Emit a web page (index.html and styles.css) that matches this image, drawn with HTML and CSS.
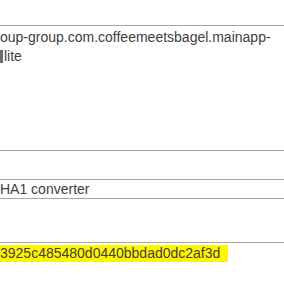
FILE: index.html
```html
<!DOCTYPE html>
<html>
<head>
<meta charset="utf-8">
<link rel="stylesheet" href="styles.css">
</head>
<body>
<div class="page">
  <div class="gap-top"></div>
  <div class="row row-tall">
    <div class="cell">oup-group.com.coffeemeetsbagel.mainapp-<br><span class="sel"></span>lite</div>
  </div>
  <div class="row row-empty"></div>
  <div class="row row-text">
    <div class="cell">HA1 converter</div>
  </div>
  <div class="row row-empty2"></div>
  <div class="row row-hash">
    <div class="cell"><span class="mark">3925c485480d0440bbdad0dc2af3d</span></div>
  </div>
</div>
</body>
</html>
```
FILE: styles.css
```css
html, body {
  margin: 0;
  padding: 0;
  background: #ffffff;
}
.page {
  width: 284px;
  height: 284px;
  overflow: hidden;
  font-family: "Liberation Sans", Arial, sans-serif;
  font-size: 14px;
  color: #404040;
  display: flex;
  flex-direction: column;
}
.gap-top {
  height: 25px;
  flex: none;
}
.row {
  border-top: 1px solid #a6a6a6;
  flex: none;
  box-sizing: border-box;
}
.cell {
  line-height: 19px;
  white-space: nowrap;
}
.row-tall {
  height: 125px;
  padding-top: 2px;
}
.row-empty {
  height: 29px;
}
.row-text {
  height: 19px;
}
.row-text .cell {
  line-height: 18px;
}
.row-empty2 {
  height: 44px;
}
.row-hash {
  height: 40px;
  padding-top: 1px;
}
.sel {
  display: inline-block;
  width: 3px;
  height: 13px;
  vertical-align: -2px;
  margin-right: 1px;
  background: #6e6e6e;
}
.mark {
  background: #fff700;
  padding: 0 8px 1px 0;
  display: inline-block;
  line-height: 16px;
}
```
